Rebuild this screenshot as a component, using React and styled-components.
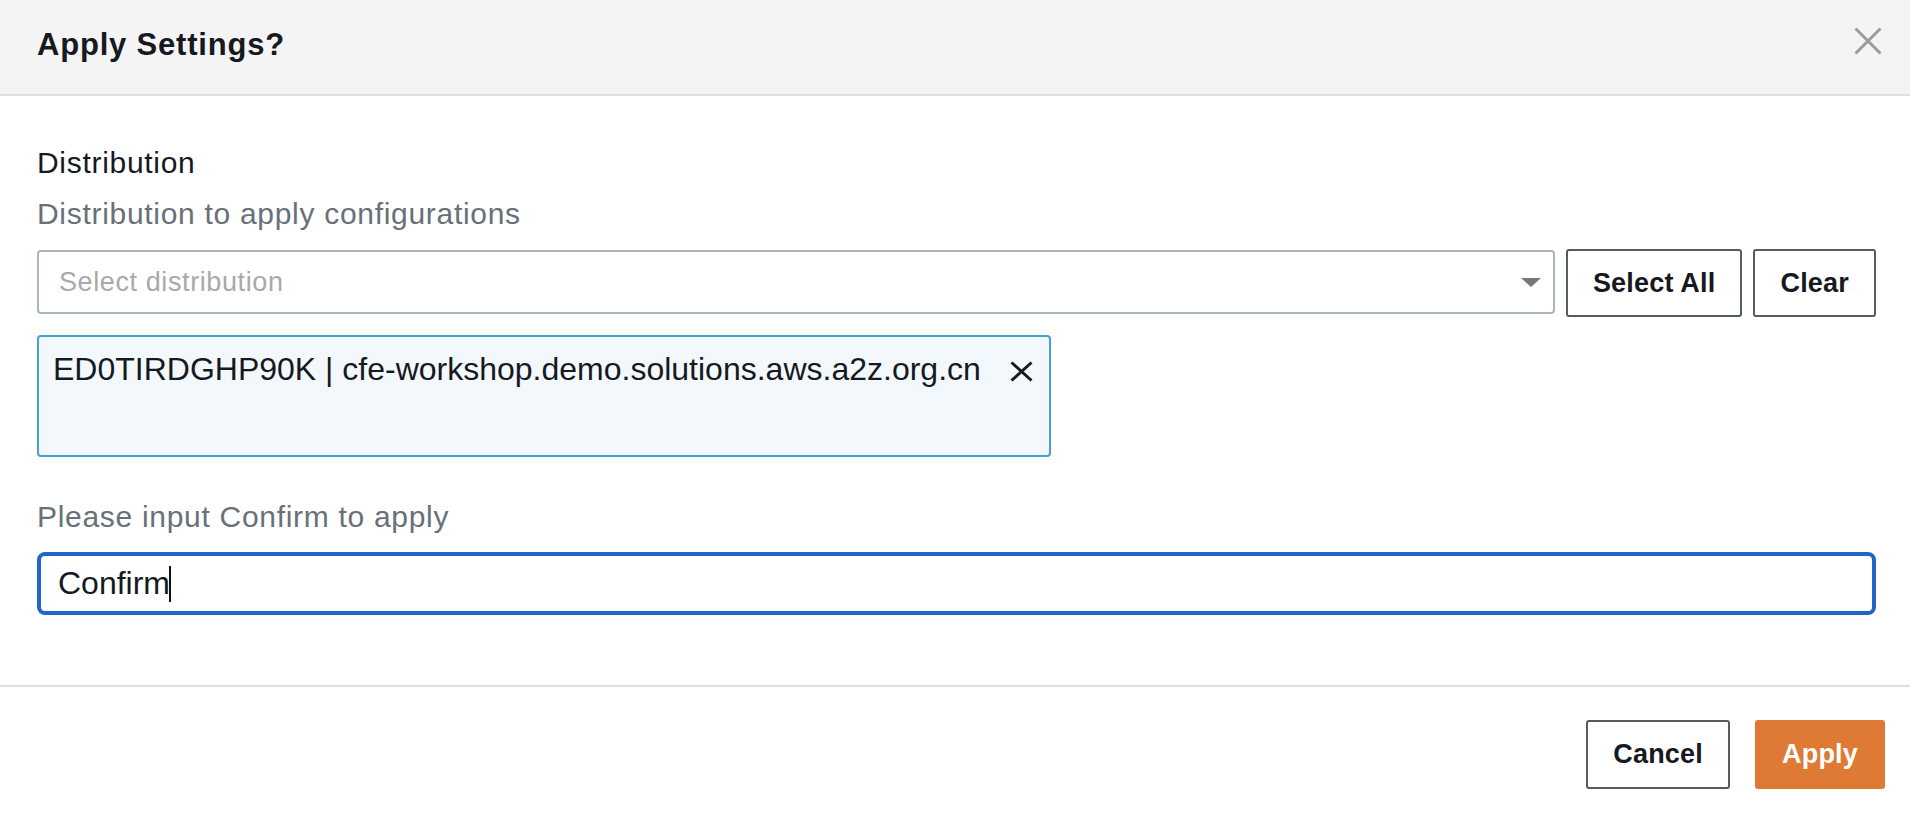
import React from 'react'
import styled, { createGlobalStyle } from 'styled-components'

const Global = createGlobalStyle`
  html, body {
    margin: 0;
    padding: 0;
    background: #ffffff;
  }
  body {
    font-family: "Liberation Sans", Arial, Helvetica, sans-serif;
    color: #16191f;
  }
`

const Modal = styled.section`
  display: flex;
  flex-direction: column;
  width: 100%;
  min-height: 814px;
  background: #fff;
`

const Header = styled.header`
  display: flex;
  align-items: flex-start;
  justify-content: space-between;
  box-sizing: border-box;
  height: 96px;
  padding: 27px 28px 0 37px;
  background: #f4f4f4;
  border-bottom: 2px solid #dfdfdf;
`

const Title = styled.h2`
  margin: 0;
  font-size: 31px;
  line-height: 36px;
  letter-spacing: 0.8px;
  font-weight: bold;
  color: #16191f;
`

const CloseButton = styled.button`
  display: flex;
  padding: 0;
  border: 0;
  background: none;
  cursor: pointer;
`

const Body = styled.div`
  display: flex;
  flex-direction: column;
  padding: 49px 34px 70px 37px;
`

const Label = styled.div`
  font-size: 30px;
  line-height: 36px;
  letter-spacing: 0.7px;
  color: ${p => (p.$muted ? '#687078' : '#16191f')};
  margin-top: ${p => p.$gap || 0}px;
`

const SelectRow = styled.div`
  display: flex;
  align-items: flex-start;
  gap: 11px;
  margin-top: 17px;
`

const Select = styled.div`
  flex: 1;
  display: flex;
  align-items: center;
  justify-content: space-between;
  box-sizing: border-box;
  height: 64px;
  margin-top: 1px;
  padding: 0 12px 0 20px;
  border: 2px solid #aab7b8;
  border-radius: 4px;
  background: #fff;
`

const Placeholder = styled.span`
  font-size: 27px;
  letter-spacing: 0.6px;
  color: #a9a9a9;
`

const Caret = styled.span`
  width: 0;
  height: 0;
  border-left: 10px solid transparent;
  border-right: 10px solid transparent;
  border-top: 9px solid #777777;
`

const Button = styled.button`
  box-sizing: border-box;
  height: ${p => p.$h || 68}px;
  padding: 0 25px;
  border: 2px solid ${p => (p.$primary ? '#df7a35' : '#545b64')};
  border-radius: 3px;
  background: ${p => (p.$primary ? '#df7a35' : '#ffffff')};
  color: ${p => (p.$primary ? '#ffffff' : '#16191f')};
  font-family: "Liberation Sans", Arial, sans-serif;
  font-size: 27px;
  letter-spacing: 0.2px;
  font-weight: bold;
  cursor: pointer;
`

const Token = styled.div`
  display: flex;
  align-items: flex-start;
  gap: 29px;
  box-sizing: border-box;
  width: 1014px;
  height: 122px;
  margin-top: 18px;
  padding: 13px 20px 0 14px;
  border: 2px solid #45a1cb;
  border-radius: 4px;
  background: #f2f8fc;
`

const TokenText = styled.span`
  font-size: 32px;
  line-height: 38px;
  color: #16191f;
  white-space: nowrap;
`

const Dismiss = styled.span`
  display: flex;
  margin-top: 11px;
`

const Input = styled.div`
  display: flex;
  align-items: center;
  box-sizing: border-box;
  height: 63px;
  margin-top: 17px;
  padding-left: 17px;
  border: 4px solid #2364c8;
  border-radius: 8px;
  font-size: 32px;
  color: #16191f;
`

const Cursor = styled.span`
  display: inline-block;
  width: 2px;
  height: 36px;
  margin-left: -1px;
  background: #111;
`

const Footer = styled.footer`
  display: flex;
  justify-content: flex-end;
  gap: 25px;
  padding: 33px 25px 0;
  border-top: 2px solid #e0e0e0;
`

const Cross = ({ w, h, color, stroke }) => (
  <svg width={w} height={h} viewBox={`0 0 ${w} ${h}`}>
    <path
      d={`M1.5 1.5 L${w - 1.5} ${h - 1.5} M${w - 1.5} 1.5 L1.5 ${h - 1.5}`}
      stroke={color}
      strokeWidth={stroke}
      fill="none"
    />
  </svg>
)

export default function App() {
  return (
    <>
      <Global />
      <Modal>
        <Header>
          <Title>Apply Settings?</Title>
          <CloseButton aria-label="Close">
            <Cross w={28} h={28} color="#9b9b9b" stroke={3} />
          </CloseButton>
        </Header>
        <Body>
          <Label>Distribution</Label>
          <Label $muted $gap={15}>Distribution to apply configurations</Label>
          <SelectRow>
            <Select>
              <Placeholder>Select distribution</Placeholder>
              <Caret />
            </Select>
            <Button>Select All</Button>
            <Button>Clear</Button>
          </SelectRow>
          <Token>
            <TokenText>ED0TIRDGHP90K | cfe-workshop.demo.solutions.aws.a2z.org.cn</TokenText>
            <Dismiss>
              <Cross w={23} h={21} color="#16191f" stroke={3} />
            </Dismiss>
          </Token>
          <Label $muted $gap={42}>Please input Confirm to apply</Label>
          <Input>
            Confirm
            <Cursor />
          </Input>
        </Body>
        <Footer>
          <Button $h={69}>Cancel</Button>
          <Button $primary $h={69}>Apply</Button>
        </Footer>
      </Modal>
    </>
  )
}
